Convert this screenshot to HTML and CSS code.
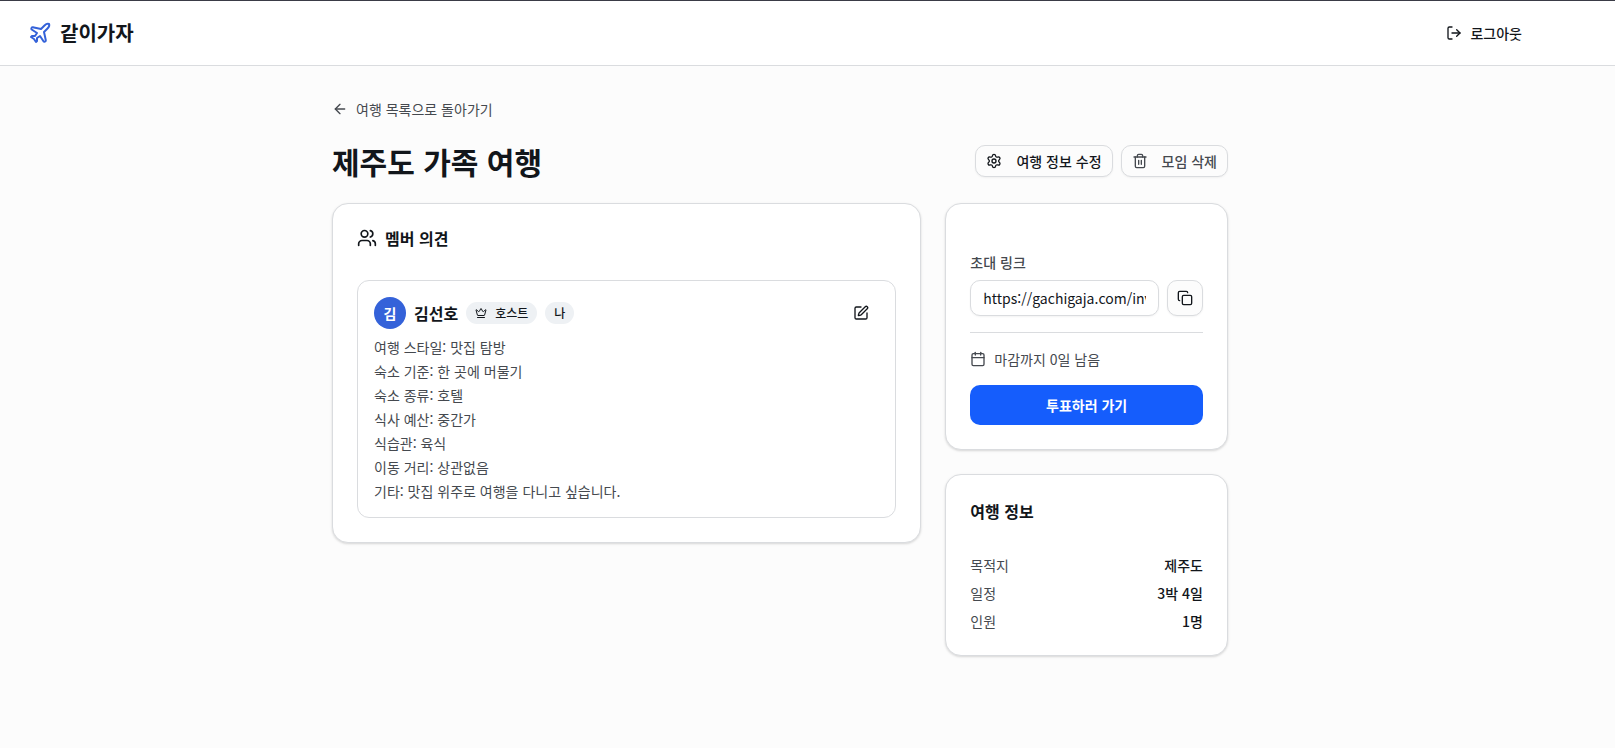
FILE: index.html
```html
<!DOCTYPE html>
<html lang="ko">
<head>
<meta charset="utf-8">
<meta name="viewport" content="width=device-width, initial-scale=1">
<title>같이가자</title>
<link rel="stylesheet" href="styles.css">
</head>
<body>
<header class="site-header">
  <div class="header-inner">
    <a class="brand" href="#">
      <svg class="icon icon-lg" viewBox="0 0 24 24"><path d="M17.8 19.2 16 11l3.5-3.5C21 6 21.5 4 21 3c-1-.5-3 0-4.5 1.5L13 8 4.8 6.2c-.5-.1-.9.1-1.1.5l-.3.5c-.2.5-.1 1 .3 1.3L9 12l-2 3H4l-1 1 3 2 2 3 1-1v-3l3-2 3.5 5.3c.3.4.8.5 1.3.3l.5-.2c.4-.3.6-.7.5-1.2z"/></svg>
      <span class="brand-name">같이가자</span>
    </a>
    <button class="logout" type="button">
      <svg class="icon" viewBox="0 0 24 24"><path d="m16 17 5-5-5-5"/><path d="M21 12H9"/><path d="M9 21H5a2 2 0 0 1-2-2V5a2 2 0 0 1 2-2h4"/></svg>
      로그아웃
    </button>
  </div>
</header>
<main class="page">
  <a class="back-link" href="#">
    <svg class="icon" viewBox="0 0 24 24"><path d="m12 19-7-7 7-7"/><path d="M19 12H5"/></svg>
    여행 목록으로 돌아가기
  </a>
  <div class="title-row">
    <h1 class="title">제주도 가족 여행</h1>
    <div class="actions">
      <button class="button" type="button">
        <svg class="icon" viewBox="0 0 24 24"><path d="M9.671 4.136a2.34 2.34 0 0 1 4.659 0 2.34 2.34 0 0 0 3.319 1.915 2.34 2.34 0 0 1 2.33 4.033 2.34 2.34 0 0 0 0 3.831 2.34 2.34 0 0 1-2.33 4.033 2.34 2.34 0 0 0-3.319 1.915 2.34 2.34 0 0 1-4.659 0 2.34 2.34 0 0 0-3.32-1.915 2.34 2.34 0 0 1-2.33-4.033 2.34 2.34 0 0 0 0-3.831A2.34 2.34 0 0 1 6.35 6.051a2.34 2.34 0 0 0 3.319-1.915"/><circle cx="12" cy="12" r="3"/></svg>
        여행 정보 수정
      </button>
      <button class="button button-muted" type="button">
        <svg class="icon" viewBox="0 0 24 24"><path d="M10 11v6M14 11v6"/><path d="M19 6v14a2 2 0 0 1-2 2H7a2 2 0 0 1-2-2V6"/><path d="M3 6h18"/><path d="M8 6V4a2 2 0 0 1 2-2h4a2 2 0 0 1 2 2v2"/></svg>
        모임 삭제
      </button>
    </div>
  </div>
  <div class="columns">
    <section class="card members">
      <h2 class="card-title">
        <svg class="icon icon-md" viewBox="0 0 24 24"><path d="M16 21v-2a4 4 0 0 0-4-4H6a4 4 0 0 0-4 4v2"/><path d="M16 3.128a4 4 0 0 1 0 7.744"/><path d="M22 21v-2a4 4 0 0 0-3-3.87"/><circle cx="9" cy="7" r="4"/></svg>
        멤버 의견
      </h2>
      <article class="member">
        <div class="member-head">
          <span class="avatar">김</span>
          <h3 class="member-name">김선호</h3>
          <span class="badge">
            <svg class="icon icon-sm" viewBox="0 0 24 24"><path d="M11.562 3.266a.5.5 0 0 1 .876 0L15.39 8.87a1 1 0 0 0 1.516.294L21.183 5.5a.5.5 0 0 1 .798.519l-2.834 10.246a1 1 0 0 1-.956.734H5.81a1 1 0 0 1-.957-.734L2.02 6.02a.5.5 0 0 1 .798-.519l4.276 3.664a1 1 0 0 0 1.516-.294z"/><path d="M5 21h14"/></svg>
            호스트
          </span>
          <span class="badge">나</span>
          <button class="edit" type="button" aria-label="의견 수정">
            <svg class="icon" viewBox="0 0 24 24"><path d="M12 3H5a2 2 0 0 0-2 2v14a2 2 0 0 0 2 2h14a2 2 0 0 0 2-2v-7"/><path d="M18.375 2.625a1 1 0 0 1 3 3l-9.013 9.014a2 2 0 0 1-.853.505l-2.873.84a.5.5 0 0 1-.62-.62l.84-2.873a2 2 0 0 1 .506-.852z"/></svg>
          </button>
        </div>
        <ul class="answers">
          <li>여행 스타일: 맛집 탐방</li>
          <li>숙소 기준: 한 곳에 머물기</li>
          <li>숙소 종류: 호텔</li>
          <li>식사 예산: 중간가</li>
          <li>식습관: 육식</li>
          <li>이동 거리: 상관없음</li>
          <li>기타: 맛집 위주로 여행을 다니고 싶습니다.</li>
        </ul>
      </article>
    </section>
    <aside class="side">
      <section class="card invite">
        <div class="field">
          <label class="label" for="invite-link">초대 링크</label>
          <div class="link-row">
            <input class="input" id="invite-link" type="text" readonly value="https://gachigaja.com/invite/jeju">
            <button class="copy" type="button" aria-label="링크 복사">
              <svg class="icon" viewBox="0 0 24 24"><rect width="14" height="14" x="8" y="8" rx="2" ry="2"/><path d="M4 16c-1.1 0-2-.9-2-2V4c0-1.1.9-2 2-2h10c1.1 0 2 .9 2 2"/></svg>
            </button>
          </div>
        </div>
        <hr class="divider">
        <p class="deadline">
          <svg class="icon" viewBox="0 0 24 24"><path d="M8 2v4"/><path d="M16 2v4"/><rect width="18" height="18" x="3" y="4" rx="2"/><path d="M3 10h18"/></svg>
          마감까지 0일 남음
        </p>
        <button class="vote" type="button">투표하러 가기</button>
      </section>
      <section class="card">
        <h2 class="card-title">여행 정보</h2>
        <dl class="facts">
          <div class="fact"><dt>목적지</dt><dd>제주도</dd></div>
          <div class="fact"><dt>일정</dt><dd>3박 4일</dd></div>
          <div class="fact"><dt>인원</dt><dd>1명</dd></div>
        </dl>
      </section>
    </aside>
  </div>
</main>
</body>
</html>
```
FILE: styles.css
```css
:root {
  --ink: #12161b;
  --muted: #45494f;
  --line: #dadcdf;
  --page: #fcfcfc;
  --brand: #3462d9;
  --gutter: 55px;
}

* {
  box-sizing: border-box;
}

body {
  margin: 0;
  min-height: 100vh;
  border-top: 1px solid #3a3b46;
  background: var(--page);
  color: var(--ink);
  font-family: "Noto Sans CJK KR", "Noto Sans", sans-serif;
  font-size: 14px;
  line-height: 20px;
}

h1, h2, h3, p, ul, dl, dd {
  margin: 0;
  padding: 0;
}

button, input {
  font: inherit;
  color: inherit;
}

button {
  cursor: pointer;
}

a {
  color: inherit;
  text-decoration: none;
}

.icon {
  width: 16px;
  height: 16px;
  flex: none;
  fill: none;
  stroke: currentColor;
  stroke-width: 2;
  stroke-linecap: round;
  stroke-linejoin: round;
}

.icon-sm {
  width: 12px;
  height: 12px;
}

.icon-md {
  width: 20px;
  height: 20px;
}

.icon-lg {
  width: 24px;
  height: 24px;
}

.site-header {
  padding-right: var(--gutter);
  border-bottom: 1px solid var(--line);
  background: #fff;
}

.header-inner {
  display: flex;
  align-items: center;
  justify-content: space-between;
  max-width: 1536px;
  height: 64px;
  margin: 0 auto;
  padding: 0 16px;
}

.brand {
  display: flex;
  align-items: center;
  gap: 8px;
}

.brand .icon {
  color: var(--brand);
}

.brand-name {
  font-size: 20px;
  font-weight: 700;
  line-height: 28px;
}

.logout {
  display: flex;
  align-items: center;
  gap: 8px;
  height: 32px;
  padding: 0 10px;
  border: 0;
  border-radius: 10px;
  background: none;
  font-weight: 500;
}

.page {
  box-sizing: content-box;
  width: calc(100% - var(--gutter) - 32px);
  max-width: 896px;
  margin: 0 auto;
  padding: 33px var(--gutter) 32px 0;
}

.back-link {
  display: flex;
  align-items: center;
  gap: 8px;
  width: fit-content;
  margin-bottom: 24px;
  color: var(--muted);
}

.title-row {
  display: flex;
  align-items: center;
  justify-content: space-between;
  margin-bottom: 24px;
}

.title {
  font-size: 30px;
  font-weight: 700;
  line-height: 36px;
}

.actions {
  display: flex;
  gap: 8px;
}

.button {
  display: flex;
  align-items: center;
  gap: 14px;
  height: 32px;
  padding: 0 10px;
  border: 1px solid var(--line);
  border-radius: 10px;
  background: var(--page);
  box-shadow: 0 1px 2px rgb(0 0 0 / 5%);
  font-weight: 500;
}

.button-muted {
  color: var(--muted);
}

.columns {
  display: grid;
  grid-template-columns: repeat(3, minmax(0, 1fr));
  align-items: start;
  gap: 24px;
}

.members {
  grid-column: span 2;
}

.side {
  display: grid;
  gap: 24px;
}

.card {
  padding: 24px;
  border: 1px solid var(--line);
  border-radius: 16px;
  background: #fff;
  box-shadow: 0 1px 3px rgb(0 0 0 / 10%), 0 1px 2px rgb(0 0 0 / 6%);
}

.card-title {
  display: flex;
  align-items: center;
  gap: 8px;
  margin-bottom: 32px;
  font-size: 16px;
  font-weight: 700;
  line-height: 20px;
}

.side .card-title {
  line-height: 24px;
}

.member {
  padding: 16px;
  border: 1px solid var(--line);
  border-radius: 12px;
}

.member-head {
  display: flex;
  align-items: center;
  gap: 8px;
  margin-bottom: 8px;
}

.avatar {
  display: grid;
  place-items: center;
  width: 32px;
  height: 32px;
  border-radius: 50%;
  background: var(--brand);
  color: #fff;
  font-weight: 700;
}

.member-name {
  font-size: 16px;
  font-weight: 700;
  line-height: 24px;
}

.badge {
  display: flex;
  align-items: center;
  gap: 8px;
  padding: 3px 9px;
  border-radius: 11px;
  background: #eef1f4;
  font-size: 12px;
  font-weight: 500;
  line-height: 16px;
}

.edit {
  display: grid;
  place-items: center;
  width: 36px;
  height: 32px;
  margin-left: auto;
  padding: 0;
  border: 0;
  background: none;
}

.answers {
  display: grid;
  gap: 4px;
  color: var(--muted);
  list-style: none;
}

.invite {
  display: grid;
  gap: 16px;
  padding-top: 48px;
}

.field {
  display: grid;
  gap: 8px;
}

.label {
  color: var(--muted);
  font-weight: 500;
}

.link-row {
  display: flex;
  gap: 8px;
}

.input {
  flex: 1;
  min-width: 0;
  height: 36px;
  padding: 0 12px;
  border: 1px solid var(--line);
  border-radius: 10px;
  background: #fff;
  box-shadow: 0 1px 2px rgb(0 0 0 / 5%);
}

.copy {
  display: grid;
  place-items: center;
  width: 36px;
  height: 36px;
  padding: 0;
  border: 1px solid var(--line);
  border-radius: 10px;
  background: var(--page);
  box-shadow: 0 1px 2px rgb(0 0 0 / 5%);
}

.divider {
  width: 100%;
  height: 1px;
  margin: 0;
  border: 0;
  background: var(--line);
}

.deadline {
  display: flex;
  align-items: center;
  gap: 8px;
  color: var(--muted);
}

.vote {
  height: 40px;
  border: 0;
  border-radius: 10px;
  background: #155dfc;
  color: #fff;
  font-weight: 700;
}

.facts {
  display: grid;
  gap: 8px;
}

.fact {
  display: flex;
  justify-content: space-between;
}

.fact dt {
  color: var(--muted);
}

.fact dd {
  font-weight: 500;
}
```
